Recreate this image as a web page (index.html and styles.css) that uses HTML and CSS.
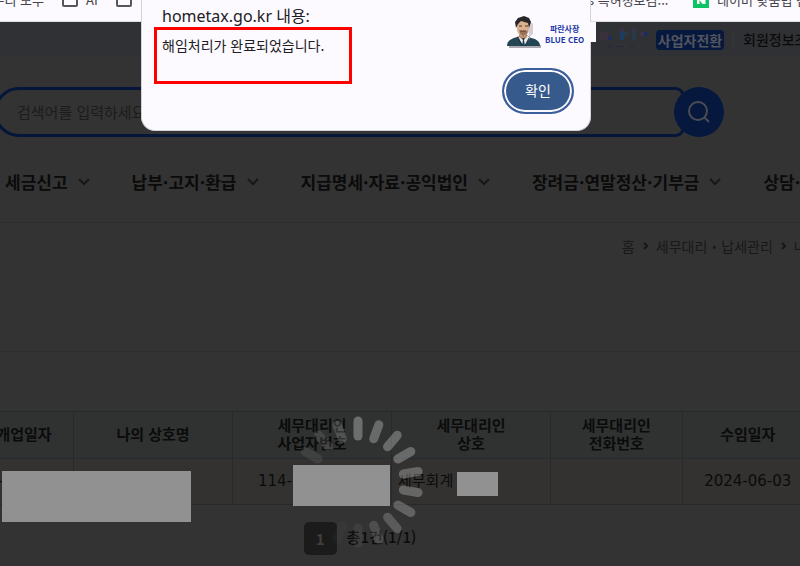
FILE: index.html
```
<!DOCTYPE html>
<html lang="ko">
<head>
  <meta charset="UTF-8">
  <meta name="viewport" content="width=device-width, initial-scale=1">
  <title>홈택스</title>
  <link rel="stylesheet" href="styles.css">
</head>
<body>

<!-- bookmarks -->
<div class="bookmarks">
  <a class="bm bm-first" href="#">우리 모두</a>
  <a class="bm bm-ai" href="#"><span class="folder"></span>AI</a>
  <a class="bm bm-folder" href="#" aria-label="폴더"><span class="folder"></span></a>
  <a class="bm bm-info" href="#">s 특허정보검...</a>
  <a class="bm bm-naver" href="#">
    <svg width="16" height="16" viewBox="0 0 16 16"><rect width="16" height="16" fill="#0cc463"/><path d="M4 12V4h3l3 4V4h2.500v8H9.500l-3-4v4z" fill="#fff"/></svg>
    네이버 맞춤법 검사기
  </a>
</div>

<!-- top menu -->
<div class="util">
  <svg class="user" width="48" height="24" viewBox="0 0 48 24">
    <path fill="#39323d" d="M0 4h8v8H0z"/>
    <path fill="#202d59" d="M8 8h4v4H8zM44 4h4v4h-4z"/>
    <path fill="#3a3049" d="M20 0h4v4h-4zM32 0h4v4h-4zM40 4h4v4h-4z"/>
    <path fill="#1d3d60" d="M20 4h4v8h-4z"/>
    <path fill="#283a4a" d="M24 4h4v4h-4zM32 4h4v8h-4z"/>
    <path fill="#202846" d="M8 18h4v1H8zM17 18h7v1h-7zM30 18h4v1h-4z"/>
  </svg>
  <button class="switch" type="button">사업자전환</button>
  <span class="bar"></span>
  <a class="util-link" href="#">회원정보조회</a>
</div>

<form class="search">
  <input class="search-text" type="text" placeholder="검색어를 입력하세요" aria-label="검색어">
  <button class="search-btn" type="button" aria-label="검색">
    <svg width="24" height="24" viewBox="0 0 24 24" fill="none" stroke="#4b4d53" stroke-width="2"><circle cx="11" cy="11" r="9"/><path d="M17 17l5 5"/></svg>
  </button>
</form>

<nav class="menu">
  <a href="#">세금신고<svg width="12" height="8" viewBox="0 0 12 8"><path d="M1 1l5 5 5-5"/></svg></a>
  <a href="#">납부·고지·환급<svg width="12" height="8" viewBox="0 0 12 8"><path d="M1 1l5 5 5-5"/></svg></a>
  <a href="#">지급명세·자료·공익법인<svg width="12" height="8" viewBox="0 0 12 8"><path d="M1 1l5 5 5-5"/></svg></a>
  <a href="#">장려금·연말정산·기부금<svg width="12" height="8" viewBox="0 0 12 8"><path d="M1 1l5 5 5-5"/></svg></a>
  <a href="#">상담·불복·고충</a>
</nav>

<div class="location">
  <a href="#">홈</a>
  <svg width="5" height="8" viewBox="0 0 5 8"><path d="M1 1l3 3-3 3"/></svg>
  <a href="#">세무대리・납세관리</a>
  <svg width="5" height="8" viewBox="0 0 5 8"><path d="M1 1l3 3-3 3"/></svg>
  <a href="#">나의 세무대리</a>
</div>

<main class="content">
  <table class="list">
    <colgroup>
      <col class="c-date"><col class="c-name"><col class="c-name"><col class="c-name"><col class="c-tel"><col class="c-tel">
    </colgroup>
    <thead>
      <tr>
        <th>개업일자</th>
        <th>나의 상호명</th>
        <th>세무대리인<br>사업자번호</th>
        <th>세무대리인<br>상호</th>
        <th>세무대리인<br>전화번호</th>
        <th>수임일자</th>
      </tr>
    </thead>
    <tbody>
      <tr>
        <td class="open">-</td>
        <td></td>
        <td class="num">114-</td>
        <td class="office">세무회계</td>
        <td></td>
        <td>2024-06-03</td>
      </tr>
    </tbody>
  </table>

  <div class="paging">
    <button class="page" type="button">1</button>
    <span class="total">총1건(1/1)</span>
  </div>
</main>

<!-- loading -->
<svg class="loading" width="136" height="136" viewBox="-68 -68 136 136" stroke="#fff" stroke-width="9" stroke-linecap="round">
  <path d="M0-61V-46" opacity=".29"/>
  <path d="M0-61V-46" opacity=".27" transform="rotate(20)"/>
  <path d="M0-61V-46" opacity=".27" transform="rotate(40)"/>
  <path d="M0-61V-46" opacity=".27" transform="rotate(60)"/>
  <path d="M0-61V-46" opacity=".26" transform="rotate(80)"/>
  <path d="M0-61V-46" opacity=".25" transform="rotate(100)"/>
  <path d="M0-61V-46" opacity=".23" transform="rotate(120)"/>
  <path d="M0-61V-46" opacity=".19" transform="rotate(140)"/>
  <path d="M0-61V-46" opacity=".13" transform="rotate(160)"/>
  <path d="M0-61V-46" opacity=".05" transform="rotate(180)"/>
  <path d="M0-61V-46" opacity=".02" transform="rotate(200)"/>
  <path d="M0-61V-46" opacity=".07" transform="rotate(300)"/>
  <path d="M0-61V-46" opacity=".10" transform="rotate(320)"/>
  <path d="M0-61V-46" opacity=".16" transform="rotate(340)"/>
</svg>

<span class="mask mask-name"></span>
<span class="mask mask-num"></span>
<span class="mask mask-office"></span>

<!-- alert -->
<div class="alert" role="alertdialog" aria-labelledby="alert-title" aria-describedby="alert-msg">
  <div class="alert-text">
    <h1 id="alert-title">hometax.go.kr 내용:</h1>
    <p id="alert-msg">해임처리가 완료되었습니다.</p>
  </div>
  <div class="alert-side">
    <div class="logo">
      <svg width="34" height="32" viewBox="0 0 34 32">
        <path d="M2 29h32v3H2z" fill="#aaa7ad"/>
        <path d="M21 3l5 5v10l-4 3z" fill="#d5cdd1"/>
        <path d="M0 30c0-5 3-7 10-9l4-2h6l4 3c6 1 9 4 9 8z" fill="#244654"/>
        <path d="M12 19h8l3 3-6 8-6-8z" fill="#eee8e4"/>
        <path d="M12 16h8v5l-4 3-4-3z" fill="#b98b68"/>
        <path d="M10 7c0-4 12-4 12 0v6c0 4-3 7-6 7s-6-3-6-7z" fill="#dbb28d"/>
        <path d="M9 12L8 6l3-4 6-2 5 2 2 4-2 6-1-5-7-2-3 3z" fill="#29262a"/>
        <path d="M12 10h3M18 10h3M13 15h6" stroke="#47352e" fill="none"/>
        <path d="M12 13l1 5 3 2 4-2 1-5-1 2h-7z" fill="#64473a" opacity=".6"/>
        <path d="M15 22h3l-1 2 1 6h-3l1-6z" fill="#183b56"/>
        <path d="M11 21l4 9M22 22l-4 8" stroke="#152f3c" fill="none"/>
      </svg>
      <div class="logo-text"><b>파란사장</b><b>BLUE CEO</b></div>
    </div>
    <button class="ok" type="button">확인</button>
  </div>
</div>

</body>
</html>
```
FILE: styles.css
```
* {
  box-sizing: border-box;
}

body {
  margin: 0;
  position: relative;
  overflow: hidden;
  background: #333;
  color: #0b0b0b;
  font-family: "Noto Sans CJK KR", sans-serif;
  font-size: 15px;
  line-height: 18px;
}

a {
  color: inherit;
  text-decoration: none;
}

button {
  border: 0;
  padding: 0;
  font-family: inherit;
}

/* bookmarks */
.bookmarks {
  display: flex;
  align-items: center;
  height: 44px;
  margin-top: -22px;
  background: #fdfaff;
  border-bottom: 1px solid #dcdbe3;
  color: #45454c;
  font-size: 13px;
  white-space: nowrap;
}

.bm {
  display: flex;
  align-items: center;
  gap: 8px;
}

.bm-first {
  width: 62px;
  margin-left: -10px;
  padding-right: 8px;
  justify-content: flex-end;
}

.bm-ai {
  width: 54px;
  margin-left: 10px;
}

.bm-info {
  margin-left: 456px;
}

.bm-naver {
  margin-left: auto;
  width: 107px;
  flex-shrink: 0;
}

.bm-naver svg {
  flex-shrink: 0;
}

.folder {
  width: 16px;
  height: 14px;
  border: 2px solid #55555b;
  border-radius: 2px;
}

/* top menu */
.util {
  display: flex;
  align-items: center;
  justify-content: flex-end;
  height: 35px;
  background: #303134;
  font-size: 14px;
  white-space: nowrap;
}

.user {
  flex-shrink: 0;
  margin-right: 8px;
}

.switch {
  width: 68px;
  height: 20px;
  border-radius: 4px;
  background: #07183f;
  color: #52555e;
  font-size: 14px;
  font-weight: 700;
  line-height: 18px;
}

.bar {
  width: 1px;
  height: 12px;
  margin: 0 9px;
  background: #38383b;
}

.util-link {
  width: 57px;
  padding-bottom: 2px;
  overflow: hidden;
  font-weight: 500;
}

/* search */
.search {
  display: flex;
  margin: 30px 76px 0 -6px;
}

.search-text {
  flex: 1;
  height: 50px;
  margin-right: -11px;
  padding: 0 20px 2px;
  border: 3px solid #06163b;
  border-radius: 26px 10px 10px 26px;
  background: #333;
  font-family: inherit;
  font-size: 15px;
}

.search-text::placeholder {
  color: #1c1c1c;
}

.search-btn {
  position: relative;
  width: 50px;
  height: 50px;
  border-radius: 50%;
  background: #07183f;
}

.search-btn svg {
  display: block;
  margin: 0 auto;
}

/* menu */
.menu {
  display: flex;
  align-items: center;
  gap: 42px;
  height: 86px;
  padding: 4px 0 0 5px;
  border-bottom: 1px solid #2e2e2e;
  font-size: 17px;
  font-weight: 700;
  white-space: nowrap;
}

.menu a {
  display: flex;
  align-items: center;
  gap: 10px;
}

.menu path,
.location path {
  fill: none;
  stroke: #171717;
  stroke-width: 2;
}

.location {
  display: flex;
  align-items: center;
  justify-content: flex-end;
  gap: 8px;
  height: 128px;
  margin-right: -75px;
  padding-bottom: 82px;
  color: #181818;
  font-size: 14px;
  white-space: nowrap;
}

/* list */
.content {
  padding-top: 59px;
  border-top: 1px solid #2e2e2e;
}

.list {
  width: calc(100% + 40px);
  margin-left: -26px;
  border-collapse: collapse;
  table-layout: fixed;
}

.c-date {
  width: 99px;
}

.c-name {
  width: 159px;
}

.list th,
.list td {
  padding: 0 0 2px;
  border: 1px solid #252b2c;
  text-align: center;
}

.list th {
  height: 47px;
  background: #2f3231;
  font-weight: 700;
}

.list td {
  height: 46px;
  background: #333230;
  font-family: "DejaVu Sans", "Noto Sans CJK KR", sans-serif;
}

.list .open {
  padding-right: 70px;
  text-align: right;
}

.list .num {
  padding-left: 25px;
  text-align: left;
}

.list .office {
  padding-left: 6px;
  text-align: left;
}

.paging {
  display: flex;
  align-items: center;
  justify-content: center;
  gap: 10px;
  margin: 17px 80px 11px 0;
  font-weight: 500;
}

.total {
  padding-bottom: 4px;
}

.page {
  width: 33px;
  height: 33px;
  border-radius: 5px;
  background: #1b1b1b;
  color: #3f3f3f;
  font-size: 15px;
  font-weight: 700;
}

/* loading */
.loading {
  position: absolute;
  top: 414px;
  left: 290px;
}

.mask {
  position: absolute;
  background: #919191;
}

.mask-name {
  top: 471px;
  left: 2px;
  width: 189px;
  height: 51px;
}

.mask-num {
  top: 465px;
  left: 293px;
  width: 97px;
  height: 41px;
}

.mask-office {
  top: 472px;
  left: 457px;
  width: 41px;
  height: 24px;
}

/* alert */
.alert {
  position: absolute;
  top: 0;
  left: 141px;
  display: flex;
  justify-content: space-between;
  width: 450px;
  height: 131px;
  border: 1px solid #d4d3dc;
  border-top: 0;
  border-radius: 0 0 14px 14px;
  background: #fdfaff;
  color: #202024;
}

.alert h1 {
  margin: 0;
  padding: 6px 0 0 20px;
  font-family: "Noto Sans", "Noto Sans CJK KR", sans-serif;
  font-size: 16px;
  font-weight: 400;
  line-height: 21px;
}

.alert p {
  width: 198px;
  height: 57px;
  margin: 0 0 0 12px;
  padding: 6px 5px;
  border: 3px solid #f00;
  font-size: 14px;
}

.alert-side {
  display: flex;
  flex-direction: column;
  align-items: flex-end;
  gap: 26px;
  margin-right: -6px;
  padding-top: 22px;
}

.logo {
  display: flex;
  align-items: center;
  gap: 4px;
  width: 89px;
  height: 20px;
  background: #fdfaff;
}

.logo svg {
  flex-shrink: 0;
}

.logo-text {
  display: flex;
  flex-direction: column;
  align-items: center;
  padding-top: 4px;
  color: #1b36a5;
  font-size: 8px;
  line-height: 11px;
  white-space: nowrap;
}

.ok {
  width: 72px;
  height: 46px;
  margin-right: 22px;
  padding-bottom: 2px;
  border: 2px solid #3b5f9d;
  border-radius: 23px;
  background: #375a8c;
  box-shadow: inset 0 0 0 2px #fdfaff;
  color: #fff;
  font-size: 14px;
}
```
